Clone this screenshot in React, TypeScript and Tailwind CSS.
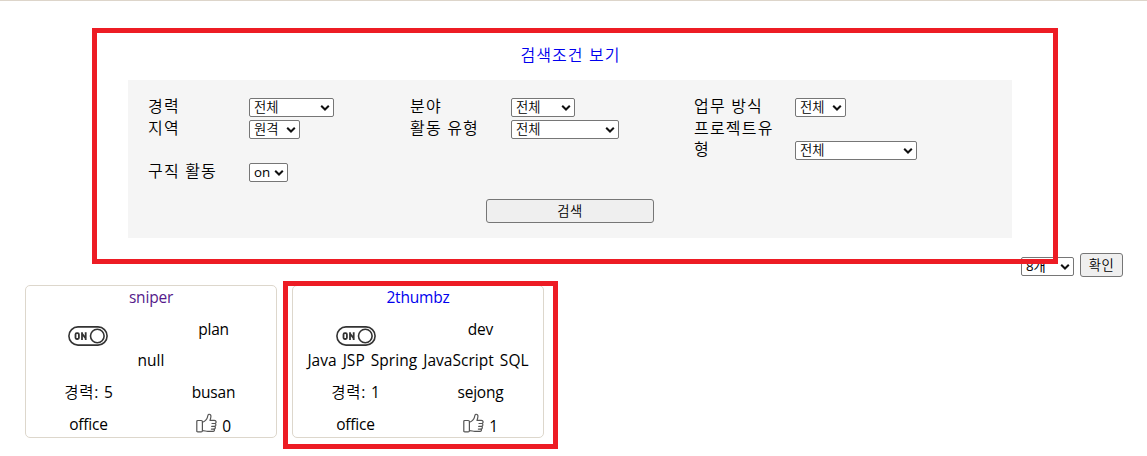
import React from "react";

type Option = { label: string; value: string; width: string; tall?: boolean };

const rows: Option[][] = [
  [
    { label: "경력", value: "전체", width: "w-[85px]" },
    { label: "분야", value: "전체", width: "w-[64px]" },
    { label: "업무 방식", value: "전체", width: "w-[51px]" },
  ],
  [
    { label: "지역", value: "원격", width: "w-[51px]" },
    { label: "활동 유형", value: "전체", width: "w-[108px]" },
    { label: "프로젝트유형", value: "전체", width: "w-[122px]", tall: true },
  ],
  [{ label: "구직 활동", value: "on", width: "w-[39px]" }],
];

function Select({ value, width }: { value: string; width: string }) {
  const weight = /[a-z0-9]/.test(value) ? "font-normal" : "font-[350]";
  return (
    <span className={`relative block h-[19px] shrink-0 ${width}`}>
      <select className={`block h-[19px] w-full appearance-none rounded-[2px] border border-[#767676] bg-white pl-[4px] text-[13.333px] leading-[17px] text-black ${weight}`}>
        <option>{value}</option>
      </select>
      <svg className="pointer-events-none absolute top-[6px] right-[4px] h-[8px] w-[10px]" viewBox="0 0 10 8" fill="none">
        <path d="M1.2 1.7 5 5.5 8.8 1.7" stroke="#101010" strokeWidth="2" />
      </svg>
    </span>
  );
}

function Toggle() {
  return (
    <svg className="h-[20px] w-[40px]" viewBox="0 0 40 20" fill="none" stroke="#333">
      <rect x="0.9" y="0.9" width="38.2" height="18.2" rx="9.1" strokeWidth="1.6" />
      <circle cx="29.3" cy="10" r="6.8" strokeWidth="1.6" />
      <rect x="7.5" y="7.2" width="3.4" height="5.8" rx="1.2" strokeWidth="1.8" />
      <path d="M14 14V6.3M17.7 14V6.3M14 7.5l3.7 5" strokeWidth="1.8" />
    </svg>
  );
}

function Thumb() {
  return (
    <svg className="h-[21px] w-[21px]" viewBox="0 0 21 21" fill="none" stroke="#555" strokeWidth="1.2" strokeLinejoin="round" strokeLinecap="round">
      <path d="M1.8 7.5h3.4c.8 0 1.2.4 1.2 1.2v9c0 .8-.4 1.2-1.2 1.2H1.8c-.7 0-1-.4-1-1V8.5c0-.6.3-1 1-1Z" />
      <path d="M6.5 9.3c2.5-1 4.5-3.3 5-5.2.2-1 .2-2.6 1.3-2.8 1.6-.3 2.3 1.1 2.1 2.5-.1 1-.5 2.5-.9 3.6h4.3c2.3 0 2.4 3 .5 3.1 1.6.4 1.5 2.8-.3 2.9 1.4.5 1 2.6-.5 2.7.9.7.4 2.3-1 2.3h-5.2c-2 0-3-.8-5.3-.8" />
      <path d="M16 10.5h2.5M15.7 13.4h2.5M15.4 16.1h2.3" />
    </svg>
  );
}

type Profile = { name: string; visited?: boolean; field: string; skills: string; years: number; region: string; likes: number };

const profiles: Profile[] = [
  { name: "sniper", visited: true, field: "plan", skills: "null", years: 5, region: "busan", likes: 0 },
  { name: "2thumbz", field: "dev", skills: "Java JSP Spring JavaScript SQL", years: 1, region: "sejong", likes: 1 },
];

function Card({ p }: { p: Profile }) {
  return (
    <article className="grid h-[153px] w-[252px] grid-cols-2 grid-rows-[22px_22px_21px_22px_22px] gap-y-[10px] rounded-[5px] border border-[#ddd7cc] text-center leading-[22px] tracking-[-0.2px] [word-spacing:2px]">
      <a className={`col-span-2 ${p.visited ? "text-[#551a8b]" : "text-[#0000ee]"}`}>{p.name}</a>
      <span className={`flex justify-center pt-[8px] ${p.visited ? "pr-[2px]" : ""}`}><Toggle /></span>
      <span>{p.field}</span>
      <span className="col-span-2 -mt-px tracking-[0.03px] whitespace-nowrap">{p.skills}</span>
      <span><span className="font-[350] tracking-[0.7px]">경력</span>: {p.years}</span>
      <span>{p.region}</span>
      <span>office</span>
      <span className="flex justify-center gap-[5px]">
        <Thumb />
        <span className="pt-[2px]">{p.likes}</span>
      </span>
    </article>
  );
}

export default function App() {
  return (
    <main className="relative h-[456px] w-[1147px] overflow-hidden border-t border-[#ddd5ca] bg-white font-['Open_Sans','Noto_Sans_CJK_KR',sans-serif] text-[15.5px] text-black">
      <div className="ml-[128px] w-[884px]">
        <h1 className="h-[79px] pt-[43px] pl-px text-center text-[16px] leading-[22px] font-[350] tracking-[1.1px] text-[#0000ee]">검색조건 보기</h1>
        <form className="h-[158px] bg-[#f5f5f5] pt-[15px] pl-[20px]">
          {rows.map((row, i) => (
            <div key={i} className="grid grid-cols-[262px_284px_1fr]">
              {row.map((o) => (
                <label key={o.label} className={`flex ${o.tall ? "items-end" : "items-start"}`}>
                  <span className="w-[101px] shrink-0 pt-px pr-[20px] text-[16px] leading-[21px] font-[350] tracking-[1.2px] break-all">{o.label}</span>
                  <span className={o.tall ? "" : "pt-[3px]"}>
                    <Select value={o.value} width={o.width} />
                  </span>
                </label>
              ))}
            </div>
          ))}
          <button type="button" className="mt-[17px] ml-[338px] block h-[24px] w-[168px] rounded-[3px] border border-[#767676] bg-[#efefef] pt-px text-[13.333px] leading-[21px] font-[350] tracking-[0.5px]">검색</button>
        </form>
      </div>
      <div className="mt-[15px] mr-[24px] flex items-start justify-end gap-[6px]">
        <div className="pt-[4px]"><Select value="8개" width="w-[53px]" /></div>
        <button type="button" className="h-[24px] w-[43px] rounded-[3px] border border-[#767676] bg-[#efefef] pt-px text-[13.333px] leading-[21px] font-[350] tracking-[0.5px]">확인</button>
      </div>
      <section className="mt-[8px] ml-[25px] flex gap-[15px]">
        {profiles.map((p) => <Card key={p.name} p={p} />)}
      </section>
      <div className="pointer-events-none absolute top-[27px] left-[92px] h-[236px] w-[966px] border-[5px] border-[#ed1c24]" />
      <div className="pointer-events-none absolute top-[280px] left-[283px] h-[168px] w-[275px] border-[5px] border-[#ed1c24]" />
    </main>
  );
}
